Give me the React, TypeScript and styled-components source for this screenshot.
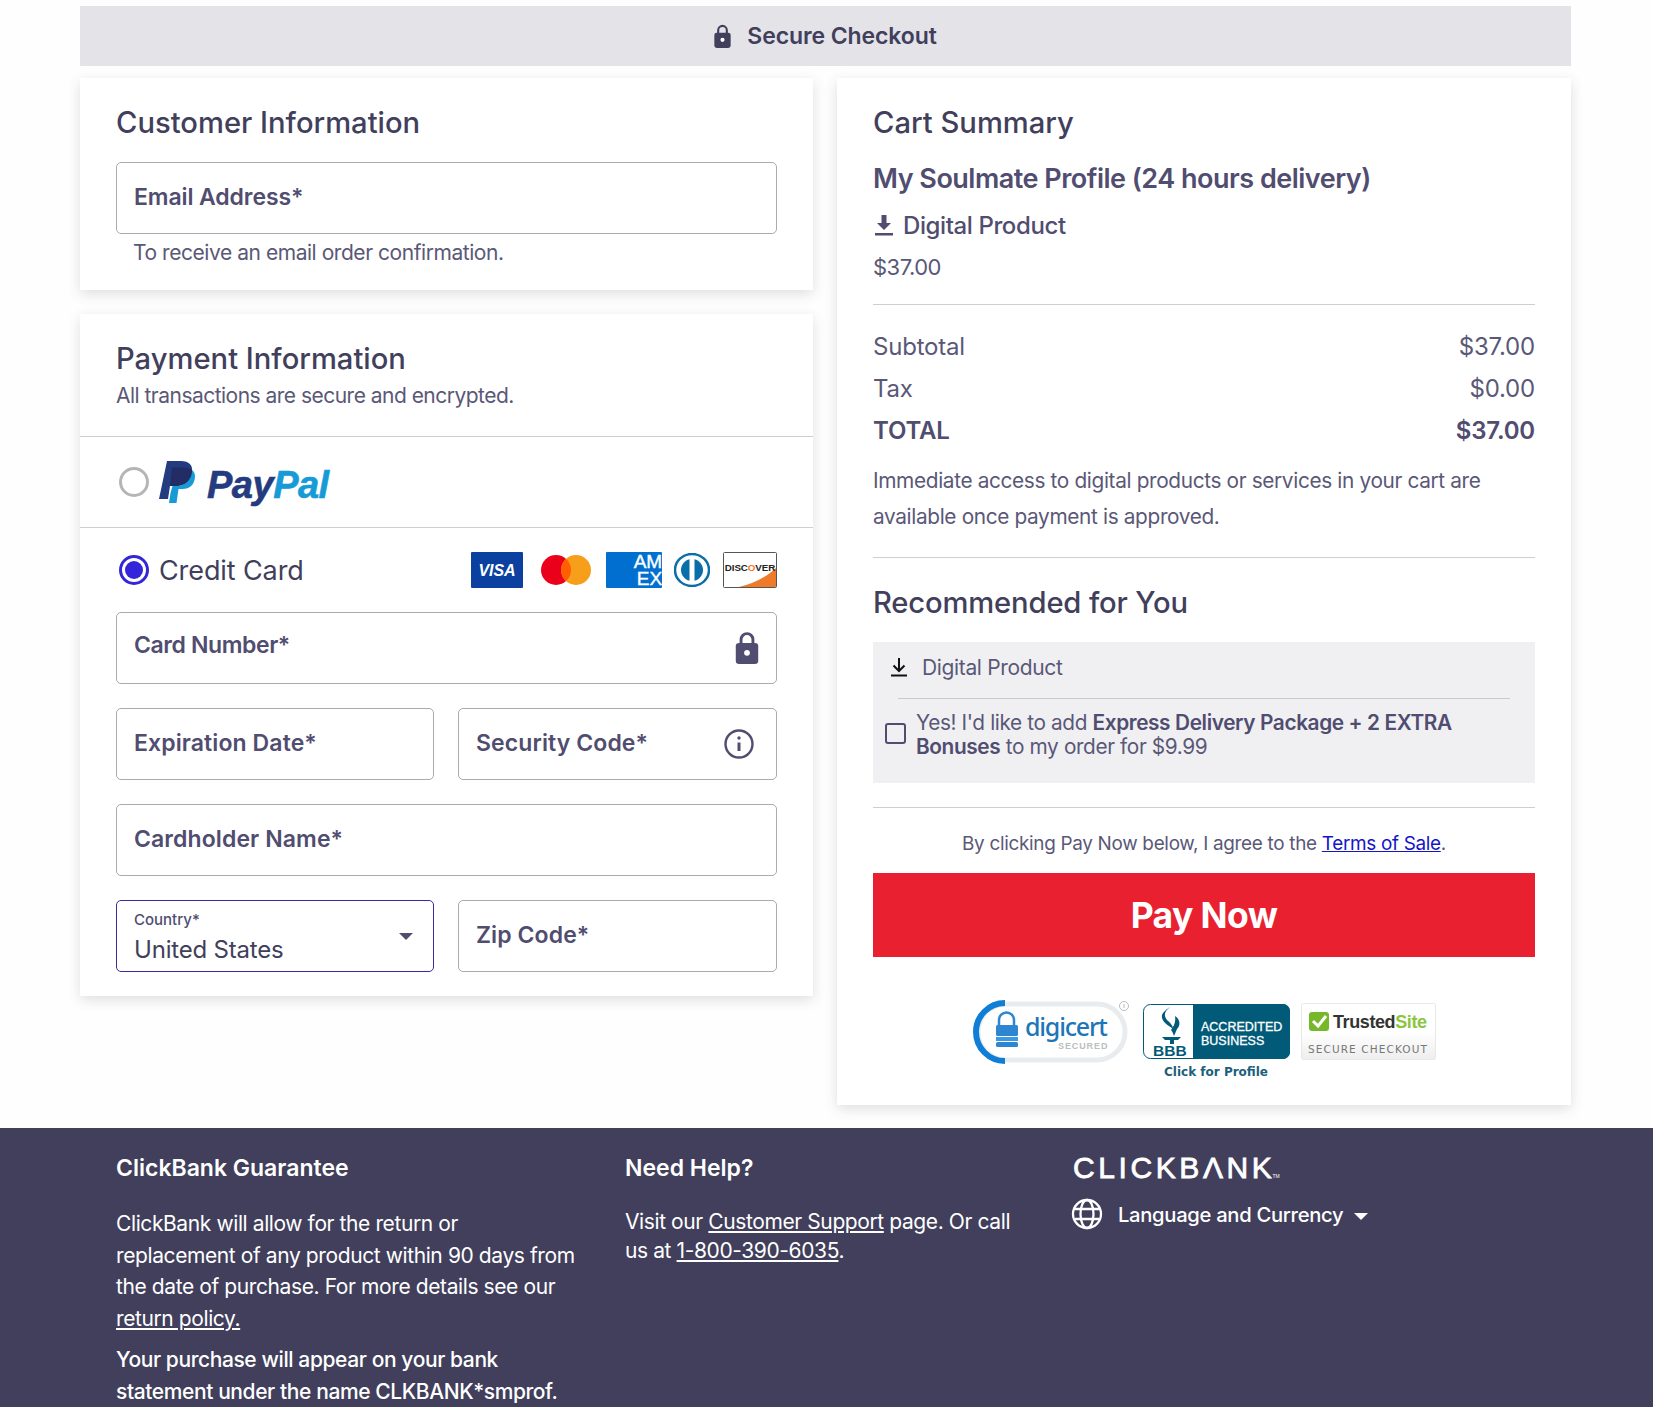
import * as React from 'react';
import styled, { createGlobalStyle } from 'styled-components';

const FONT = `Inter, "Noto Sans", "Liberation Sans", sans-serif`;
const INK = '#413f5c';
const LABEL = '#504d70';
const SOFT = '#5a5877';

const GlobalStyle = createGlobalStyle`
    html, body {
        margin: 0;
        padding: 0;
        background: #fefefe;
    }
    body {
        font-family: ${FONT};
        color: ${INK};
    }
    * {
        box-sizing: border-box;
    }
`;

const Page = styled.div`
    width: 1653px;
    height: 1407px;
    overflow: hidden;
    padding-top: 6px;
    display: flex;
    flex-direction: column;
`;

const Main = styled.div`
    width: 1491px;
    margin-left: 80px;
`;

const SecureBar = styled.div`
    height: 60px;
    background: #e3e3e8;
    display: flex;
    align-items: center;
    justify-content: center;
    gap: 16px;
    font-size: 23px;
    font-weight: 600;
    letter-spacing: -0.1px;
`;

const Columns = styled.div`
    display: grid;
    grid-template-columns: 733px 734px;
    gap: 24px;
    margin-top: 12px;
    align-items: start;
`;

const LeftColumn = styled.div`
    display: flex;
    flex-direction: column;
    gap: 24px;
`;

const Card = styled.section`
    background: #fff;
    box-shadow: 0 4px 12px rgba(60, 60, 80, 0.16);
`;

const CustomerCard = styled(Card)`
    height: 212px;
    padding: 27px 36px 0;
`;

const PaymentHead = styled.div`
    height: 123px;
    padding: 27px 36px 0;
    border-bottom: 1px solid #cfcfd3;
`;

const Title = styled.h2`
    margin: 0;
    font-size: 29.2px;
    line-height: 36px;
    font-weight: 500;
    color: ${INK};
`;

const Hint = styled.div<{ $indent?: number; $top?: number; $tight?: boolean }>`
    font-size: 21px;
    line-height: 30px;
    letter-spacing: ${p => (p.$tight ? '-0.52px' : '-0.45px')};
    color: ${SOFT};
    margin-left: ${p => p.$indent || 0}px;
    margin-top: ${p => p.$top || 0}px;
`;

const Field = styled.div<{ $active?: boolean; $tight?: boolean }>`
    position: relative;
    height: 72px;
    border: 1px solid ${p => (p.$active ? '#3b2a9e' : '#aaaaaf')};
    border-radius: 5px;
    background: #fff;
    padding: ${p => (p.$tight ? '18px' : '20px')} 17px 0;
    font-size: 23px;
    line-height: 28px;
    font-weight: 600;
    letter-spacing: ${p => (p.$tight ? '-0.4px' : '0.1px')};
    color: ${LABEL};
    display: flex;
    justify-content: space-between;
`;

const EmailField = styled(Field)`
    margin: 21px 0 4px;
    letter-spacing: -0.1px;
`;

const FieldIcon = styled.span<{ $right: number; $top: number }>`
    position: absolute;
    top: ${p => p.$top}px;
    right: ${p => p.$right}px;
    display: flex;
`;

const MiniLabel = styled.div`
    font-size: 15px;
    line-height: 18px;
    font-weight: 500;
    letter-spacing: 0;
`;

const SelectValue = styled.div`
    margin-top: 6px;
    font-size: 24px;
    line-height: 30px;
    font-weight: 400;
    letter-spacing: -0.2px;
    color: ${INK};
`;

const SelectField = styled(Field)`
    padding-top: 10px;
    display: block;
`;

const Caret = styled.span<{ $color: string; $size: number }>`
    display: inline-block;
    width: 0;
    height: 0;
    border-left: ${p => p.$size}px solid transparent;
    border-right: ${p => p.$size}px solid transparent;
    border-top: ${p => p.$size}px solid ${p => p.$color};
`;

const SelectCaret = styled.span`
    position: absolute;
    right: 20px;
    top: 32px;
    display: flex;
`;

const PayPalRow = styled.div`
    height: 91px;
    border-bottom: 1px solid #cfcfd3;
    display: flex;
    align-items: center;
    gap: 10px;
    padding-left: 39px;
`;

const Radio = styled.span<{ $on?: boolean }>`
    width: 30px;
    height: 30px;
    border-radius: 50%;
    border: 3px solid ${p => (p.$on ? '#3325d9' : '#b5b5b5')};
    display: flex;
    align-items: center;
    justify-content: center;
    flex: none;
    &::after {
        content: '';
        width: 18px;
        height: 18px;
        border-radius: 50%;
        background: ${p => (p.$on ? '#3325d9' : 'transparent')};
    }
`;

const PayPalWord = styled.span`
    font-family: "Liberation Sans", sans-serif;
    font-size: 38px;
    font-weight: 700;
    font-style: italic;
    letter-spacing: -0.5px;
    color: #253b80;
    -webkit-text-stroke: 0.6px currentColor;
    margin: 6px 0 0 2px;
    & > b {
        color: #179bd7;
    }
`;

const PaymentBody = styled.div`
    padding: 0 36px 24px;
    display: flex;
    flex-direction: column;
    gap: 24px;
`;

const CreditRow = styled.div`
    height: 84px;
    margin-bottom: -24px;
    display: flex;
    align-items: center;
    padding-left: 3px;
    font-size: 27px;
    letter-spacing: -0.1px;
    color: ${INK};
`;

const CreditLabel = styled.span`
    margin-left: 10px;
    flex: 1;
`;

const CardLogos = styled.div`
    display: flex;
    align-items: center;
    gap: 13px;
    & > svg:nth-child(1) {
        margin-right: 5px;
    }
    & > svg:nth-child(2) {
        margin-right: 2px;
    }
    & > svg:nth-child(3) {
        margin-right: -1px;
    }
`;

const TwoCol = styled.div`
    display: grid;
    grid-template-columns: 318px 319px;
    gap: 24px;
`;

const SummaryCard = styled(Card)`
    height: 1027px;
    padding: 27px 36px 0;
`;

const ProductName = styled.div`
    margin-top: 20px;
    font-size: 27px;
    line-height: 36px;
    font-weight: 600;
    letter-spacing: -0.5px;
    color: ${LABEL};
`;

const ProductType = styled.div`
    margin-top: 10px;
    height: 36px;
    display: flex;
    align-items: center;
    gap: 9px;
    font-size: 24px;
    font-weight: 500;
    letter-spacing: -0.4px;
    color: ${LABEL};
    padding-left: 1px;
`;

const Price = styled.div`
    margin-top: 9px;
    font-size: 22px;
    line-height: 30px;
    letter-spacing: -0.5px;
    color: ${SOFT};
`;

const Rule = styled.hr<{ $top: number }>`
    margin: ${p => p.$top}px 0 0;
    border: 0;
    border-top: 1px solid #cfcfd3;
`;

const Totals = styled.div`
    margin-top: 20px;
`;

const TotalRow = styled.div<{ $bold?: boolean }>`
    height: 42px;
    display: flex;
    align-items: center;
    justify-content: space-between;
    font-size: 24px;
    letter-spacing: -0.2px;
    font-weight: ${p => (p.$bold ? 600 : 400)};
    color: ${p => (p.$bold ? LABEL : SOFT)};
`;

const Notice = styled.p`
    margin: 12px 0 0;
    font-size: 20.8px;
    line-height: 36px;
    letter-spacing: -0.35px;
    color: ${SOFT};
`;

const RecommendTitle = styled(Title)`
    margin-top: 27px;
    letter-spacing: -0.15px;
`;

const UpsellBox = styled.div`
    margin-top: 21px;
    height: 141px;
    background: #f0f0f3;
    padding: 0 25px;
`;

const UpsellHead = styled.div`
    height: 56px;
    display: flex;
    align-items: center;
    gap: 13px;
    margin-left: -9px;
    font-size: 21px;
    letter-spacing: -0.35px;
    color: ${SOFT};
    padding-bottom: 6px;
`;

const UpsellRule = styled.div`
    height: 1px;
    background: #c9c9ce;
`;

const UpsellLabel = styled.label`
    display: flex;
    align-items: center;
    gap: 10px;
    margin: 12px 0 0 -13px;
    font-size: 20.8px;
    line-height: 24px;
    letter-spacing: -0.38px;
    color: ${SOFT};
    & > span > b {
        font-weight: 600;
        color: ${LABEL};
    }
`;

const Checkbox = styled.span`
    width: 21px;
    height: 21px;
    margin-top: -3px;
    border: 2.5px solid ${LABEL};
    border-radius: 3px;
    flex: none;
`;

const Agree = styled.div`
    margin-top: 21px;
    height: 30px;
    text-align: center;
    font-size: 18.9px;
    line-height: 30px;
    letter-spacing: -0.3px;
    color: ${SOFT};
    & > a {
        color: #1414c8;
        text-decoration: underline;
    }
`;

const PayButton = styled.button`
    display: block;
    width: 100%;
    height: 84px;
    margin-top: 14px;
    border: 0;
    background: #e8202f;
    color: #fff;
    font-family: ${FONT};
    font-size: 35.5px;
    font-weight: 700;
    letter-spacing: -0.6px;
`;

const Badges = styled.div`
    margin-top: 43px;
    padding-left: 100px;
    display: flex;
    align-items: flex-start;
`;

const BadgeSvg = styled.svg<{ $left?: number; $top?: number }>`
    flex: none;
    margin-left: ${p => p.$left || 0}px;
    margin-top: ${p => p.$top || 0}px;
`;

const Footer = styled.footer`
    margin-top: 23px;
    flex: 1;
    background: ${INK};
    color: #fff;
    display: flex;
    padding: 23px 0 0 116px;
`;

const FooterCol = styled.div<{ $width: number }>`
    width: ${p => p.$width}px;
    flex: none;
`;

const FooterHead = styled.h3`
    margin: 0;
    font-size: 23px;
    line-height: 34px;
    font-weight: 600;
    letter-spacing: 0;
`;

const FooterText = styled.p<{ $top: number; $lh: number; $bold?: boolean }>`
    margin: ${p => p.$top}px 0 0;
    font-size: 21px;
    line-height: ${p => p.$lh}px;
    letter-spacing: -0.4px;
    font-weight: ${p => (p.$bold ? 500 : 400)};
    & > a {
        color: #fff;
        text-decoration: underline;
    }
`;

const BrandWord = styled.div`
    font-family: "Liberation Sans", sans-serif;
    font-size: 30px;
    line-height: 36px;
    letter-spacing: 3.6px;
    -webkit-text-stroke: 0.8px #fff;
    margin-top: -1px;
    color: #fff;
    & > sup {
        font-size: 5px;
        letter-spacing: 0;
        vertical-align: baseline;
        margin-left: -3px;
        -webkit-text-stroke: 0;
    }
`;

const LanguageRow = styled.div`
    margin-top: 4px;
    margin-left: -2px;
    display: flex;
    align-items: center;
    font-size: 20.2px;
    letter-spacing: -0.3px;
    font-weight: 500;
    gap: 15px;
    & > span {
        margin: 4px 0 0 -4px;
    }
`;

const LockIcon = ({ width, height, color }: { width: number; height: number; color: string }) => (
    <svg width={width} height={height} viewBox="0 0 17 25">
        <path d="M4 10V6.500a4.500 4.500 0 0 1 9 0V10" fill="none" stroke={color} strokeWidth="2.200" />
        <rect x="0" y="9" width="17" height="16" rx="2.500" fill={color} />
        <circle cx="8.500" cy="16.500" r="2.200" fill="#fff" />
    </svg>
);

const InfoIcon = () => (
    <svg width="32" height="32" viewBox="0 0 32 32" fill="none" stroke={LABEL} strokeWidth="2.400">
        <circle cx="16" cy="16" r="13.500" />
        <path d="M16 14.500V23" strokeWidth="3" />
        <circle cx="16" cy="10" r="1.700" fill={LABEL} stroke="none" />
    </svg>
);

const DownloadIcon = () => (
    <svg width="20" height="20" viewBox="0 0 20 20" fill="none" stroke="#111">
        <path d="M10 1v13M4.500 8.500l5.500 5.500 5.500-5.500" strokeWidth="2" />
        <path d="M2 18.500h16" strokeWidth="2" />
    </svg>
);

const SolidDownload = () => (
    <svg width="20" height="22" viewBox="0 0 20 22" fill={LABEL}>
        <path d="M7.500 1h5v8h4.500L10 16 3 9h4.500z" />
        <rect x="1" y="19" width="18" height="2.500" />
    </svg>
);

const GlobeIcon = () => (
    <svg width="32" height="32" viewBox="0 0 32 32" fill="none" stroke="#fff" strokeWidth="2.300">
        <circle cx="16" cy="16" r="14" />
        <ellipse cx="16" cy="16" rx="6.500" ry="14" />
        <path d="M4 11h24M4 21h24" />
    </svg>
);

const PayPalMark = () => (
    <svg width="36" height="42" viewBox="0 0 36 42">
        <path d="M8 0h14c8 0 12 4 11 11-1 9-8 14-16 14h-6l-2 13H0z" fill="#253b80" />
        <path d="M33 9c3 2 3.500 6 2.500 10-1.500 6-6 9-12 9h-4l-2 14H10l1.500-10 2-7h4c8 0 14-5 15.500-16z" fill="#179bd7" />
        <path d="M11 25h6c8 0 15-5 16-14 0-1 0-1.500 0-2-3-2-6-2.500-10-2.500H13z" fill="#222d65" />
    </svg>
);

const VisaLogo = () => (
    <svg width="52" height="36" viewBox="0 0 52 36">
        <rect width="52" height="36" rx="1" fill="#0b3fa0" />
        <text x="26" y="24" textAnchor="middle" fontFamily="Liberation Sans" fontSize="16" fontWeight="700" fontStyle="italic" fill="#fff">VISA</text>
    </svg>
);

const MasterLogo = () => (
    <svg width="50" height="30" viewBox="0 0 50 30">
        <circle cx="15" cy="15" r="15" fill="#eb001b" />
        <circle cx="35" cy="15" r="15" fill="#f79e1b" />
        <path d="M25 3.800a15 15 0 0 1 0 22.400a15 15 0 0 1 0-22.400z" fill="#ff5f00" />
    </svg>
);

const AmexLogo = () => (
    <svg width="56" height="36" viewBox="0 0 56 36">
        <rect width="56" height="36" rx="1" fill="#016fd0" />
        <text x="56" y="16" textAnchor="end" fontFamily="Liberation Sans" fontSize="19" fill="#fff" stroke="#fff" strokeWidth="0.400">AM</text>
        <text x="56" y="33" textAnchor="end" fontFamily="Liberation Sans" fontSize="19" fill="#fff" stroke="#fff" strokeWidth="0.400">EX</text>
    </svg>
);

const DinersLogo = () => (
    <svg width="36" height="34" viewBox="0 0 36 34">
        <ellipse cx="18" cy="17" rx="17" ry="16" fill="#fff" stroke="#0a6ea8" strokeWidth="2.500" />
        <ellipse cx="18" cy="17" rx="11" ry="11" fill="#0a6ea8" />
        <rect x="15.500" y="5" width="5" height="24" fill="#fff" />
    </svg>
);

const DiscoverLogo = () => (
    <svg width="54" height="36" viewBox="0 0 54 36">
        <rect x="0.500" y="0.500" width="53" height="35" rx="1" fill="#fff" stroke="#555" />
        <path d="M16 35 Q38 30 53 16V35z" fill="#ee7b2b" />
        <text x="27" y="19" textAnchor="middle" fontFamily="Liberation Sans" fontSize="9.800" fontWeight="700" fill="#222">DISC<tspan fill="#ee7b2b">O</tspan>VER</text>
    </svg>
);

const DigicertBadge = () => (
    <BadgeSvg width="164" height="64" viewBox="0 0 164 64">
        <rect x="5" y="4" width="147" height="56" rx="28" fill="#fff" stroke="#e9ecef" strokeWidth="5" />
        <path d="M32 3 A29 29 0 0 0 32 61" fill="none" stroke="#0f7ed6" strokeWidth="6" />
        <path d="M26 26v-6a7.500 7.500 0 0 1 15 0v6" fill="none" stroke="#2d86cf" strokeWidth="2.500" />
        <rect x="23" y="25" width="22" height="11" rx="1.500" fill="#2d86cf" />
        <rect x="23" y="37" width="22" height="4" fill="#3b9ae6" />
        <rect x="23" y="42" width="22" height="5" rx="1.500" fill="#2d86cf" />
        <text x="52" y="36" fontFamily="Noto Sans" fontSize="25" fontWeight="500" letterSpacing="-1.200" fill="#1d76b8">digicert</text>
        <text x="85" y="49" fontFamily="Liberation Sans" fontSize="9" letterSpacing="0.900" fontWeight="700" fill="#bbbdbf">SECURED</text>
        <circle cx="151" cy="6" r="4.500" fill="#fff" stroke="#bbb" />
        <path d="M151 4v4" stroke="#bbb" />
    </BadgeSvg>
);

const BbbBadge = () => (
    <BadgeSvg width="158" height="80" viewBox="0 0 158 80">
        <rect x="6.500" y="4.500" width="146" height="54" rx="7" fill="#fff" stroke="#005a78" />
        <path d="M56 4h90a7 7 0 0 1 7 7v41a7 7 0 0 1-7 7H56z" fill="#005a78" />
        <path d="M33 7c-5 4-7 8-3 13 3 3 6 5 6 9-5-4-12-7-11-14 1-3 5-6 8-8z" fill="#005a78" />
        <path d="M38 16c5 3 6 9 2 13l-3 7c-1-3-2-5-3-6 3-4 5-8 4-14z" fill="#005a78" />
        <path d="M25 37h19l-3 3h-13z" fill="#005a78" />
        <rect x="33" y="40" width="4" height="4" fill="#005a78" />
        <text x="16" y="55.500" fontFamily="Liberation Sans" fontSize="15.500" fontWeight="700" fill="#005a78">BBB</text>
        <text x="64" y="31" fontFamily="Liberation Sans" fontSize="12.500" fill="#fff" stroke="#fff" strokeWidth="0.300">ACCREDITED</text>
        <text x="64" y="45" fontFamily="Liberation Sans" fontSize="12.500" fill="#fff" stroke="#fff" strokeWidth="0.300">BUSINESS</text>
        <text x="79" y="76" textAnchor="middle" fontFamily="DejaVu Sans" fontSize="12" fontWeight="700" fill="#1d5f7c">Click for Profile</text>
    </BadgeSvg>
);

const TrustedBadge = () => (
    <BadgeSvg width="136" height="60" viewBox="0 0 136 60" $left={6} $top={3}>
        <defs>
            <linearGradient id="trustedFade" x1="0" y1="0" x2="0" y2="1">
                <stop offset="0.500" stopColor="#fff" />
                <stop offset="1" stopColor="#eeeeee" />
            </linearGradient>
        </defs>
        <rect x="0.500" y="0.500" width="134" height="56" rx="2" fill="url(#trustedFade)" stroke="#e8e8e8" />
        <rect x="8" y="9" width="20" height="19" rx="3" fill="#76b82a" />
        <path d="M12 18l5 5 8-10" fill="none" stroke="#fff" strokeWidth="3" />
        <text x="32" y="25" fontFamily="Liberation Sans" fontSize="18" fontWeight="700" letterSpacing="-0.400" fill="#333">Trusted<tspan fill="#8cc63f">Site</tspan></text>
        <text x="7" y="50" fontFamily="DejaVu Sans" fontSize="10.500" letterSpacing="1.100" fill="#777">SECURE CHECKOUT</text>
    </BadgeSvg>
);

/**
 * Checkout page.
 */
export default function App() {
    return (
        <Page>
            <GlobalStyle />
            <Main>
                <SecureBar>
                    <LockIcon width={17} height={24} color={INK} />
                    Secure Checkout
                </SecureBar>
                <Columns>
                    <LeftColumn>
                        <CustomerCard>
                            <Title>Customer Information</Title>
                            <EmailField>Email Address*</EmailField>
                            <Hint $indent={17}>To receive an email order confirmation.</Hint>
                        </CustomerCard>
                        <Card>
                            <PaymentHead>
                                <Title>Payment Information</Title>
                                <Hint $top={4} $tight>All transactions are secure and encrypted.</Hint>
                            </PaymentHead>
                            <PayPalRow>
                                <Radio />
                                <PayPalMark />
                                <PayPalWord>Pay<b>Pal</b></PayPalWord>
                            </PayPalRow>
                            <PaymentBody>
                                <CreditRow>
                                    <Radio $on />
                                    <CreditLabel>Credit Card</CreditLabel>
                                    <CardLogos>
                                        <VisaLogo />
                                        <MasterLogo />
                                        <AmexLogo />
                                        <DinersLogo />
                                        <DiscoverLogo />
                                    </CardLogos>
                                </CreditRow>
                                <Field $tight>
                                    Card Number*
                                    <FieldIcon $right={17} $top={18}><LockIcon width={24} height={33} color={LABEL} /></FieldIcon>
                                </Field>
                                <TwoCol>
                                    <Field>Expiration Date*</Field>
                                    <Field>
                                        Security Code*
                                        <FieldIcon $right={21} $top={19}><InfoIcon /></FieldIcon>
                                    </Field>
                                </TwoCol>
                                <Field>Cardholder Name*</Field>
                                <TwoCol>
                                    <SelectField $active>
                                        <MiniLabel>Country*</MiniLabel>
                                        <SelectValue>United States</SelectValue>
                                        <SelectCaret><Caret $color={LABEL} $size={7} /></SelectCaret>
                                    </SelectField>
                                    <Field>Zip Code*</Field>
                                </TwoCol>
                            </PaymentBody>
                        </Card>
                    </LeftColumn>
                    <SummaryCard>
                        <Title>Cart Summary</Title>
                        <ProductName>My Soulmate Profile (24 hours delivery)</ProductName>
                        <ProductType><SolidDownload /> Digital Product</ProductType>
                        <Price>$37.00</Price>
                        <Rule $top={22} />
                        <Totals>
                            <TotalRow><span>Subtotal</span><span>$37.00</span></TotalRow>
                            <TotalRow><span>Tax</span><span>$0.00</span></TotalRow>
                            <TotalRow $bold><span>TOTAL</span><span>$37.00</span></TotalRow>
                        </Totals>
                        <Notice>
                            Immediate access to digital products or services in your cart are available once payment is approved.
                        </Notice>
                        <Rule $top={22} />
                        <RecommendTitle>Recommended for You</RecommendTitle>
                        <UpsellBox>
                            <UpsellHead>
                                <DownloadIcon />
                                Digital Product
                            </UpsellHead>
                            <UpsellRule />
                            <UpsellLabel>
                                <Checkbox />
                                <span>Yes! I'd like to add <b>Express Delivery Package + 2 EXTRA Bonuses</b> to my order for $9.99</span>
                            </UpsellLabel>
                        </UpsellBox>
                        <Rule $top={24} />
                        <Agree>By clicking Pay Now below, I agree to the <a>Terms of Sale</a>.</Agree>
                        <PayButton>Pay Now</PayButton>
                        <Badges>
                            <DigicertBadge />
                            <BbbBadge />
                            <TrustedBadge />
                        </Badges>
                    </SummaryCard>
                </Columns>
            </Main>
            <Footer>
                <FooterCol $width={509}>
                    <FooterHead>ClickBank Guarantee</FooterHead>
                    <FooterText $top={23} $lh={31.500}>
                        ClickBank will allow for the return or<br />
                        replacement of any product within 90 days from<br />
                        the date of purchase. For more details see our<br />
                        <a>return policy.</a>
                    </FooterText>
                    <FooterText $top={10} $lh={31.500} $bold>
                        Your purchase will appear on your bank<br />
                        statement under the name CLKBANK*smprof.
                    </FooterText>
                </FooterCol>
                <FooterCol $width={448}>
                    <FooterHead>Need Help?</FooterHead>
                    <FooterText $top={23} $lh={28.500}>
                        Visit our <a>Customer Support</a> page. Or call<br />
                        us at <a>1-800-390-6035</a>.
                    </FooterText>
                </FooterCol>
                <FooterCol $width={400}>
                    <BrandWord>CLICKBΛNK<sup>TM</sup></BrandWord>
                    <LanguageRow>
                        <GlobeIcon />
                        Language and Currency
                        <Caret $color="#fff" $size={7} />
                    </LanguageRow>
                </FooterCol>
            </Footer>
        </Page>
    );
}
